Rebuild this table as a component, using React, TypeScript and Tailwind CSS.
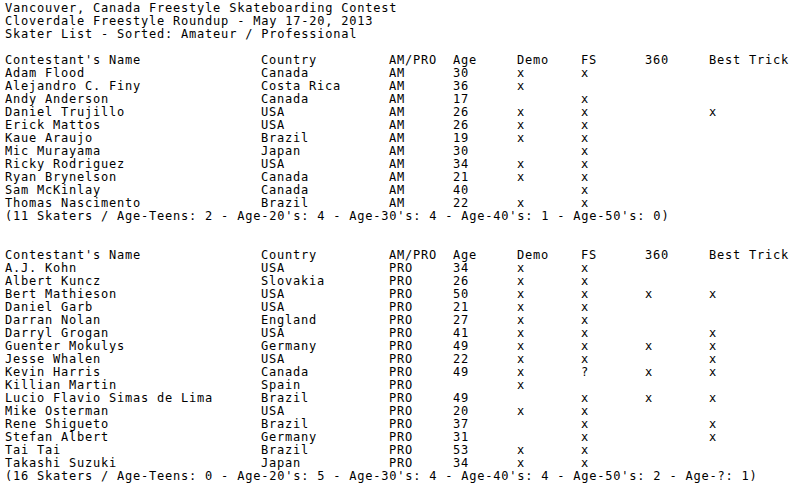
type Skater = [string, string, string, string, string, string, string, string];

const amateurs: Skater[] = [
  ["Adam Flood", "Canada", "AM", "30", "x", "x", "", ""],
  ["Alejandro C. Finy", "Costa Rica", "AM", "36", "x", "", "", ""],
  ["Andy Anderson", "Canada", "AM", "17", "", "x", "", ""],
  ["Daniel Trujillo", "USA", "AM", "26", "x", "x", "", "x"],
  ["Erick Mattos", "USA", "AM", "26", "x", "x", "", ""],
  ["Kaue Araujo", "Brazil", "AM", "19", "x", "x", "", ""],
  ["Mic Murayama", "Japan", "AM", "30", "", "x", "", ""],
  ["Ricky Rodriguez", "USA", "AM", "34", "x", "x", "", ""],
  ["Ryan Brynelson", "Canada", "AM", "21", "x", "x", "", ""],
  ["Sam McKinlay", "Canada", "AM", "40", "", "x", "", ""],
  ["Thomas Nascimento", "Brazil", "AM", "22", "x", "x", "", ""],
];

const pros: Skater[] = [
  ["A.J. Kohn", "USA", "PRO", "34", "x", "x", "", ""],
  ["Albert Kuncz", "Slovakia", "PRO", "26", "x", "x", "", ""],
  ["Bert Mathieson", "USA", "PRO", "50", "x", "x", "x", "x"],
  ["Daniel Garb", "USA", "PRO", "21", "x", "x", "", ""],
  ["Darran Nolan", "England", "PRO", "27", "x", "x", "", ""],
  ["Darryl Grogan", "USA", "PRO", "41", "x", "x", "", "x"],
  ["Guenter Mokulys", "Germany", "PRO", "49", "x", "x", "x", "x"],
  ["Jesse Whalen", "USA", "PRO", "22", "x", "x", "", "x"],
  ["Kevin Harris", "Canada", "PRO", "49", "x", "?", "x", "x"],
  ["Killian Martin", "Spain", "PRO", "", "x", "", "", ""],
  ["Lucio Flavio Simas de Lima", "Brazil", "PRO", "49", "", "x", "x", "x"],
  ["Mike Osterman", "USA", "PRO", "20", "x", "x", "", ""],
  ["Rene Shigueto", "Brazil", "PRO", "37", "", "x", "", "x"],
  ["Stefan Albert", "Germany", "PRO", "31", "", "x", "", "x"],
  ["Tai Tai", "Brazil", "PRO", "53", "x", "x", "", ""],
  ["Takashi Suzuki", "Japan", "PRO", "34", "x", "x", "", ""],
];

const header: Skater = ["Contestant's Name", "Country", "AM/PRO", "Age", "Demo", "FS", "360", "Best Trick"];

const Row = ({ cells }: { cells: Skater }) => (
  <div className="grid grid-cols-[256px_128px_64px_64px_64px_64px_64px_1fr] h-[13px] whitespace-pre">
    {cells.map((c, i) => (
      <span key={i}>{c}</span>
    ))}
  </div>
);

const Line = ({ children }: { children?: string }) => (
  <div className="h-[13px] whitespace-pre">{children}</div>
);

const Section = ({ rows, summary }: { rows: Skater[]; summary: string }) => (
  <div>
    <Row cells={header} />
    {rows.map((r) => (
      <Row key={r[0]} cells={r} />
    ))}
    <Line>{summary}</Line>
  </div>
);

export default function App() {
  return (
    <div
      className="w-[800px] h-[490px] bg-white text-black pl-[5px] pt-[2px] text-[12px] leading-[13px] tracking-[0.78px] overflow-hidden"
      style={{ fontFamily: '"DejaVu Sans Mono", monospace' }}
    >
      <Line>Vancouver, Canada Freestyle Skateboarding Contest</Line>
      <Line>Cloverdale Freestyle Roundup - May 17-20, 2013</Line>
      <Line>Skater List - Sorted: Amateur / Professional</Line>
      <Line />
      <Section
        rows={amateurs}
        summary="(11 Skaters / Age-Teens: 2 - Age-20's: 4 - Age-30's: 4 - Age-40's: 1 - Age-50's: 0)"
      />
      <Line />
      <Line />
      <Section
        rows={pros}
        summary="(16 Skaters / Age-Teens: 0 - Age-20's: 5 - Age-30's: 4 - Age-40's: 4 - Age-50's: 2 - Age-?: 1)"
      />
    </div>
  );
}
